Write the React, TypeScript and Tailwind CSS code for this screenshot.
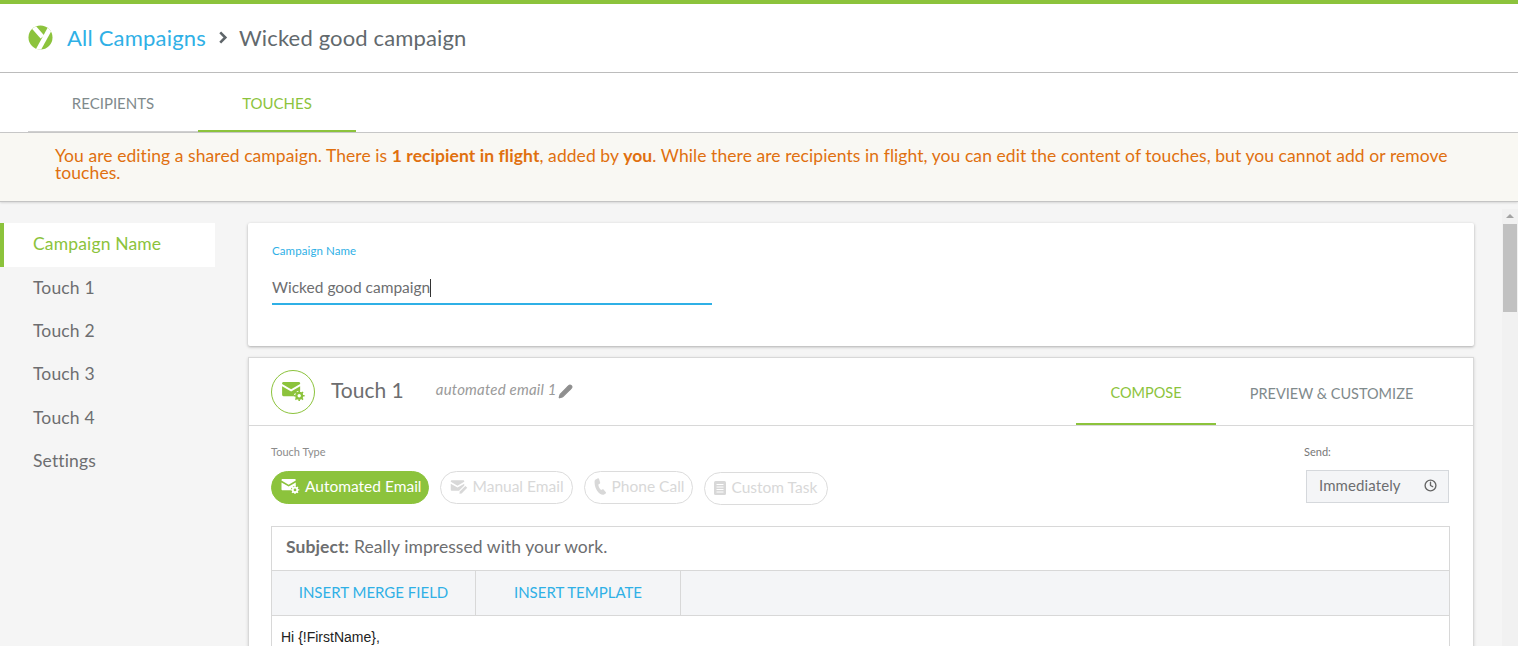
import { Clock, Pencil } from "lucide-react";
import type { ReactNode } from "react";

const GREEN = "#8cc33c";

function MailGear({ className, gear = "#fff" }: { className?: string; gear?: string }) {
  return (
    <svg viewBox="0 0 24 20" className={className} fill="currentColor">
      <path d="M0 1.5 C0 .6.6 0 1.5 0 H17.5 C18.4 0 19 .6 19 1.5 V2 L9.5 7.5 0 2 Z" />
      <path d="M0 4.5 L9.5 10 19 4.5 V9.2 A6.5 6.5 0 0 0 12.2 15 H1.5 C.6 15 0 14.4 0 13.5 Z" />
      <circle cx="18" cy="14.5" r="4.2" />
      <path d="M18 8.8v2M18 18.2v2M12.3 14.5h2M21.7 14.5h2M14 10.5l1.4 1.4M20.6 17.1l1.4 1.4M14 18.5l1.4-1.4M20.6 11.9l1.4-1.4" stroke="currentColor" strokeWidth="1.7" />
      <circle cx="18" cy="14.5" r="1.8" fill={gear} />
    </svg>
  );
}

function MailPencil({ className }: { className?: string }) {
  return (
    <svg viewBox="0 0 24 18" className={className} fill="currentColor">
      <path d="M1 1.5 C1 .6 1.6 0 2.5 0 H17.5 C18.4 0 19 .6 19 1.5 V2 L10 7.2 1 2 Z" />
      <path d="M1 4.5 L10 9.7 19 4.5 V7 L12 14 H2.5 C1.6 14 1 13.4 1 12.5 Z" />
      <path d="M20.5 7.5 L23 10 15.5 17.5 12.5 18 13 15 Z" />
    </svg>
  );
}

function Handset({ className }: { className?: string }) {
  return (
    <svg viewBox="0 0 14 19" className={className} fill="currentColor">
      <path d="M1.6 1.6 L4.2 .4 C4.8.2 5.2.5 5.4 1 L6.6 5 C6.8 5.6 6.6 6 6.1 6.3 L4.6 7.2 C4.6 9.4 6 12 7.8 13.4 L9.3 12.7 C9.8 12.5 10.3 12.6 10.6 13.1 L13 16 C13.3 16.5 13.2 17 12.8 17.3 L11 18.5 C9.8 19.2 8 18.8 6.4 17.6 C2.6 14.6 .2 9.4 .4 4 C.4 3 .8 2 1.6 1.6 Z" />
    </svg>
  );
}

function TaskDoc({ className }: { className?: string }) {
  return (
    <svg viewBox="0 0 12 14" className={className}>
      <rect width="12" height="14" rx="1.5" fill="currentColor" />
      <path d="M2.5 3.5h7M2.5 6h7M2.5 8.5h7M2.5 11h7" stroke="#fff" strokeWidth="1" />
    </svg>
  );
}

function Logo() {
  return (
    <svg viewBox="0 0 26 26" className="h-[25px] w-[25px]">
      <defs>
        <clipPath id="logo-disc">
          <circle cx="13" cy="13" r="12.5" />
        </clipPath>
      </defs>
      <circle cx="13" cy="13" r="12.5" fill={GREEN} />
      <g clipPath="url(#logo-disc)" stroke="#fff" strokeWidth="5" fill="none">
        <path d="M3.5 -0.5 L15 12.5" />
        <path d="M24 1.5 L9.5 28" />
      </g>
    </svg>
  );
}

function Pill({ icon, label, active, extra }: { icon: ReactNode; label: string; active?: boolean; extra?: string }) {
  return (
    <div
      className={`flex h-[33px] items-center gap-[5px] rounded-full border pb-[2px] pl-[9px] text-[15.5px] ${extra ?? "pr-[8px]"} ${
        active ? "border-[#8cc33c] bg-[#8cc33c] text-white" : "border-[#dcdcdc] bg-white text-[#d8d8d8]"
      }`}
    >
      {icon}
      <span>{label}</span>
    </div>
  );
}

export default function App() {
  const nav = ["Touch 1", "Touch 2", "Touch 3", "Touch 4", "Settings"];
  return (
    <div className="flex h-screen flex-col overflow-hidden bg-[#f5f5f5] font-['Lato','Open_Sans',sans-serif] text-[#6d6e70]">
      {/* Header */}
      <header className="relative flex h-[73px] shrink-0 items-center border-t-4 border-b border-t-[#8cc33c] border-b-[#bdbdbd] bg-white pb-[1px] pl-[28px] shadow-[0_1px_2px_rgba(0,0,0,0.15)]">
        <Logo />
        <span className="ml-[14px] text-[22px] tracking-[0.2px] text-[#2fb0e6]">All Campaigns</span>
        <svg viewBox="0 0 10 14" className="ml-[12px] h-[13px] w-[10px] text-[#5f666a]">
          <path d="M2 1.5 L7.5 7 2 12.5" stroke="currentColor" strokeWidth="2.8" fill="none" />
        </svg>
        <span className="ml-[11px] text-[22px] tracking-[0.15px] text-[#62696d]">Wicked good campaign</span>
      </header>

      {/* Tabs */}
      <div className="relative flex h-[60px] shrink-0 border-b border-[#c9c9c9] bg-white pl-[28px] shadow-[0_1px_2px_rgba(0,0,0,0.1)]">
        <div className="flex w-[170px] items-center justify-center border-b border-[#d0d0d0] pt-[3px] text-[15px] text-[#7f8a8c]">RECIPIENTS</div>
        <div className="flex w-[158px] items-center justify-center border-b-2 border-[#8cc33c] pt-[3px] text-[15px] text-[#8cc33c]">TOUCHES</div>
      </div>

      {/* Banner */}
      <div className="relative h-[69px] shrink-0 border-b border-[#c4c4c4] bg-[#f9f8f3] pl-[55px] pr-[56px] pt-[14px] text-[17.5px] leading-[17px] tracking-[0.07px] text-[#e0700f] shadow-[0_1px_2px_rgba(0,0,0,0.12)]">
        You are editing a shared campaign. There is <b>1 recipient in flight</b>, added by <b>you</b>. While there are recipients in flight, you can edit the content of touches, but you cannot add or remove touches.
      </div>

      <div className="flex min-h-0 flex-1">
        {/* Sidebar */}
        <aside className="w-[215px] shrink-0 pt-[21px] text-[17.5px] tracking-[0.15px]">
          <div className="flex h-[44px] items-center border-l-[4px] border-[#8cc33c] bg-white pb-[2px] pl-[29px] text-[#8cc33c]">Campaign Name</div>
          {nav.map((n) => (
            <div key={n} className="flex h-[43.4px] items-center pb-[2px] pl-[33px] text-[#6d6e70]">{n}</div>
          ))}
        </aside>

        {/* Main */}
        <main className="w-[1259px] shrink-0 pl-[33px] pt-[21px]">
          <section className="h-[123px] w-[1226px] rounded-[2px] bg-white pl-[24px] pt-[21px] shadow-[0_1px_3px_rgba(0,0,0,0.3)]">
            <div className="text-[11.5px] leading-[14px] tracking-[0.1px] text-[#2fb0e6]">Campaign Name</div>
            <div className="mt-[15px] flex h-[26px] w-[440px] items-center pt-[3px] text-[15.5px] text-[#6d6e70]">
              Wicked good campaign<span className="h-[18px] w-px bg-[#333]" />
            </div>
            <div className="mt-[4px] h-[2px] w-[440px] bg-[#2fb0e6]" />
          </section>

          <section className="mt-[11px] w-[1226px] border border-[#d8d8d8] bg-white shadow-[0_1px_3px_rgba(0,0,0,0.15)]">
            <div className="flex h-[68px] items-center border-b border-[#d8d8d8] pl-[22px]">
              <div className="flex h-[44px] w-[44px] items-center justify-center rounded-full border border-[#8cc33c] text-[#8cc33c]">
                <MailGear className="h-[19px] w-[23px]" />
              </div>
              <span className="mb-[4px] ml-[16px] text-[21px] text-[#6d6e70]">Touch 1</span>
              <span className="mb-[4px] ml-[32px] text-[15px] italic tracking-[0.2px] text-[#9a9a9a]">automated email 1</span>
              <Pencil className="ml-[1px] h-[15px] w-[15px] fill-[#8f8f8f] text-[#8f8f8f]" />
              <div className="ml-auto flex h-full items-stretch pr-[26px] text-[14.5px]">
                <div className="flex w-[140px] items-center justify-center border-b-2 border-[#8cc33c] pt-[5px] text-[#8cc33c]">COMPOSE</div>
                <div className="flex w-[231px] items-center justify-center pt-[5px] text-[#7f8a8c]">PREVIEW &amp; CUSTOMIZE</div>
              </div>
            </div>

            <div className="pl-[22px] pr-[23px] pt-[19px]">
              <div className="flex items-start justify-between">
                <div>
                  <div className="text-[11px] leading-[14px] text-[#8b8b8b]">Touch Type</div>
                  <div className="mt-[12px] flex items-start gap-[11px]">
                    <Pill active extra="pr-[6px]" label="Automated Email" icon={<MailGear className="h-[15px] w-[19px]" gear={GREEN} />} />
                    <Pill label="Manual Email" icon={<MailPencil className="h-[14px] w-[18px]" />} />
                    <Pill label="Phone Call" icon={<Handset className="h-[17px] w-[13px]" />} />
                    <Pill extra="mt-px pr-[10px]" label="Custom Task" icon={<TaskDoc className="h-[14px] w-[12px]" />} />
                  </div>
                </div>
                <div className="w-[144px]">
                  <div className="-ml-[2px] text-[11px] leading-[14px] text-[#777]">Send:</div>
                  <div className="mt-[11px] flex h-[33px] w-[143px] items-center justify-between border border-[#d5d8dc] bg-[#f4f5f7] pb-[2px] pl-[12px] pr-[11px] text-[15px] tracking-[0.1px] text-[#6d6e70]">
                    Immediately
                    <Clock className="h-[13px] w-[13px] stroke-[2.5] text-[#666]" />
                  </div>
                </div>
              </div>

              <div className="mt-[21px] border border-[#d8d8d8]">
                <div className="flex h-[43px] items-center pb-[2px] pl-[14px] text-[17.5px] tracking-[0.07px] text-[#6d6e70]">
                  <b className="mr-[5px]">Subject:</b> Really impressed with your work.
                </div>
                <div className="flex h-[46px] border-y border-[#d8d8d8] bg-[#f4f5f7] text-[15px] text-[#2fb0e6]">
                  <div className="flex w-[204px] items-center justify-center border-r border-[#d8d8d8] pb-[2px]">INSERT MERGE FIELD</div>
                  <div className="flex w-[205px] items-center justify-center border-r border-[#d8d8d8] pb-[2px]">INSERT TEMPLATE</div>
                </div>
                <div className="h-[200px] pl-[9px] pt-[13px] font-['Liberation_Sans',sans-serif] text-[14px] leading-[16px] text-[#222]">Hi {"{!FirstName}"},</div>
              </div>
            </div>
          </section>
        </main>

        {/* Scrollbar */}
        <div className="ml-auto mt-[7px] flex w-[16px] flex-col items-center bg-[#f1f1f1] pt-[5px]">
          <div className="h-0 w-0 border-x-[4px] border-b-[4px] border-x-transparent border-b-[#a3a3a3]" />
          <div className="mt-[6px] h-[88px] w-[14px] bg-[#c1c1c1]" />
        </div>
      </div>
    </div>
  );
}
